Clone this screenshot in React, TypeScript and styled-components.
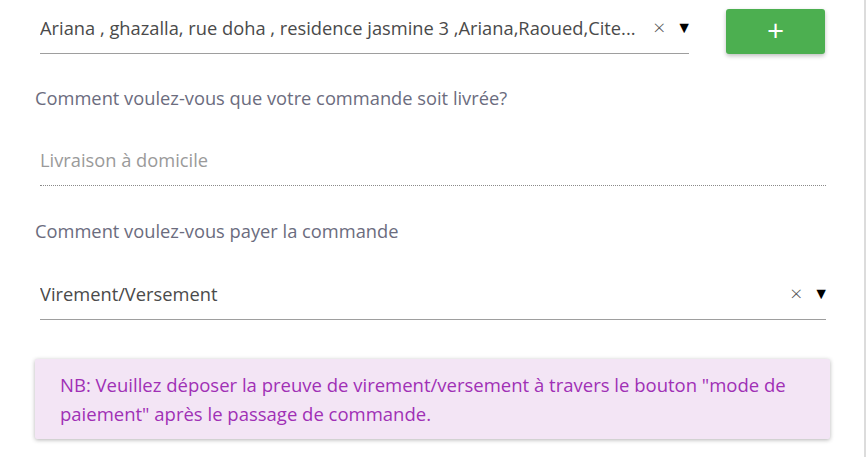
import React from "react";
import styled, { createGlobalStyle } from "styled-components";

const Global = createGlobalStyle`
  html, body { margin: 0; padding: 0; background: #fff; overflow: hidden; }
  body { font-family: "Open Sans", "Liberation Sans", sans-serif; }
`;

const Page = styled.div`
  width: 866px;
  height: 457px;
  border-right: 2px solid #dcdcdc;
  padding: 1px 0 0 35px;
  box-sizing: border-box;
  display: flex;
  flex-direction: column;
  overflow: hidden;
`;

const TopRow = styled.div`
  display: flex;
  align-items: flex-end;
  gap: 37px;
  padding-left: 5px;
`;

const SelectBox = styled.div<{ $width: number; $dotted?: boolean; $muted?: boolean }>`
  width: ${(p) => p.$width}px;
  height: 53px;
  box-sizing: border-box;
  display: flex;
  align-items: center;
  border-bottom: 1px ${(p) => (p.$dotted ? "dotted #8a8a8a" : "solid #9e9e9e")};
  font-size: 18.3px;
  color: ${(p) => (p.$muted ? "#9a9a9a" : "#4a4a4a")};
`;

const Value = styled.span`
  flex: 1;
  white-space: nowrap;
  overflow: hidden;
  text-overflow: ellipsis;
`;

const Clear = styled.span`
  font-size: 21px;
  font-weight: 300;
  color: #555;
  margin: 0 11px 0 6px;
`;

const Arrow = styled.span`
  font-size: 16px;
  color: #000;
  margin-right: -3px;
`;

const AddButton = styled.button`
  width: 99px;
  height: 45px;
  border: none;
  border-radius: 3px;
  background: #4caf50;
  color: #fff;
  font-size: 30px;
  font-weight: 400;
  line-height: 1;
  box-shadow: 0 2px 4px rgba(0, 0, 0, 0.25);
  display: flex;
  align-items: center;
  justify-content: center;
  padding: 0 0 3px;
  font-family: "Open Sans", sans-serif;
`;

const Label = styled.div<{ $top: number }>`
  margin-top: ${(p) => p.$top}px;
  font-size: 18.3px;
  line-height: 25px;
  color: #6b6c7e;
`;

const Field = styled.div<{ $top: number }>`
  margin-top: ${(p) => p.$top}px;
  padding-left: 5px;
`;

const Note = styled.div`
  margin-top: 39px;
  width: 795px;
  box-sizing: border-box;
  padding: 11px 20px 11px 25px;
  background: #f3e5f5;
  color: #a030b5;
  font-size: 18.5px;
  line-height: 29px;
  border-radius: 2px;
  box-shadow: 0 1px 4px rgba(0, 0, 0, 0.3);
`;

export default function App() {
  return (
    <>
      <Global />
      <Page>
        <TopRow>
          <SelectBox $width={649}>
            <Value>Ariana , ghazalla, rue doha , residence jasmine 3 ,Ariana,Raoued,Cite...</Value>
            <Clear>×</Clear>
            <Arrow>▼</Arrow>
          </SelectBox>
          <AddButton>+</AddButton>
        </TopRow>
        <Label $top={31}>Comment voulez-vous que votre commande soit livrée?</Label>
        <Field $top={23}>
          <SelectBox $width={786} $dotted $muted>
            <Value>Livraison à domicile</Value>
          </SelectBox>
        </Field>
        <Label $top={32}>Comment voulez-vous payer la commande</Label>
        <Field $top={24}>
          <SelectBox $width={786}>
            <Value>Virement/Versement</Value>
            <Clear>×</Clear>
            <Arrow>▼</Arrow>
          </SelectBox>
        </Field>
        <Note>
          NB: Veuillez déposer la preuve de virement/versement à travers le bouton "mode de paiement" après le passage de commande.
        </Note>
      </Page>
    </>
  );
}
